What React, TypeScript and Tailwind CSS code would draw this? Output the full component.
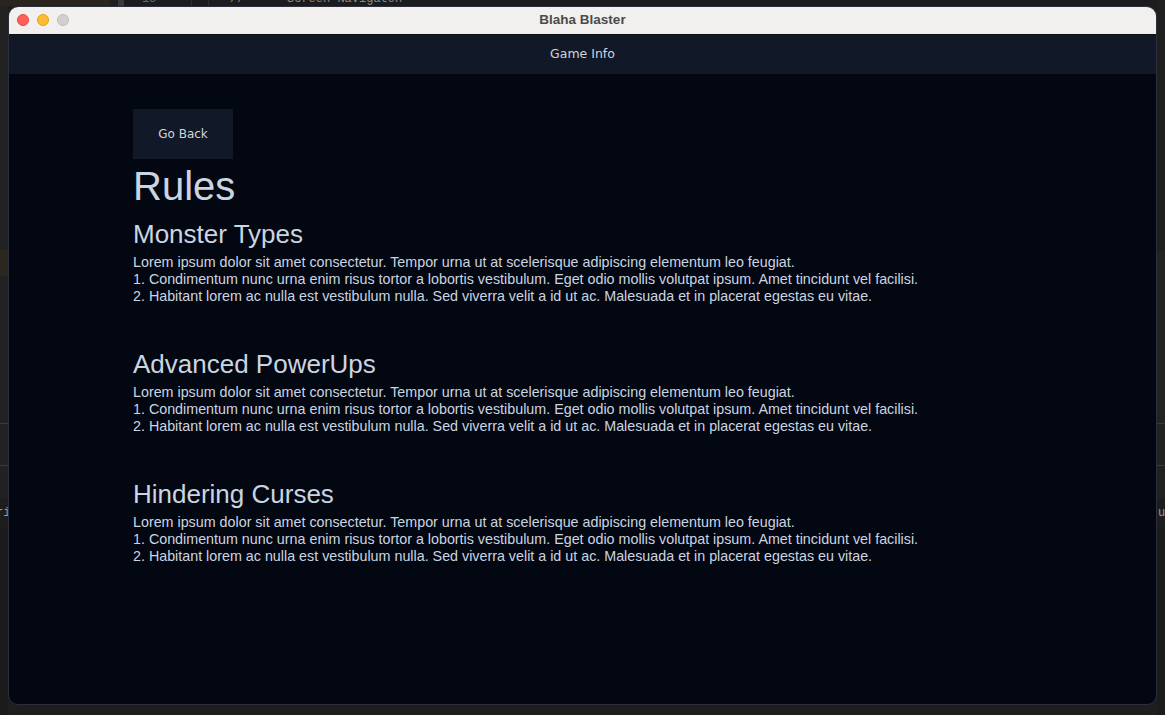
import React from "react";

const para = [
  "Lorem ipsum dolor sit amet consectetur. Tempor urna ut at scelerisque adipiscing elementum leo feugiat.",
  "1. Condimentum nunc urna enim risus tortor a lobortis vestibulum. Eget odio mollis volutpat ipsum. Amet tincidunt vel facilisi.",
  "2. Habitant lorem ac nulla est vestibulum nulla. Sed viverra velit a id ut ac. Malesuada et in placerat egestas eu vitae.",
];

const sections = ["Monster Types", "Advanced PowerUps", "Hindering Curses"];

function Section({ title }: { title: string }) {
  return (
    <section className="flex flex-col">
      <h2 className="text-[26px] leading-[40px] text-[#cbd5e1]">{title}</h2>
      <div className="text-[14.3px] leading-[17px] text-[#cbd5e1]">
        {para.map((p) => (
          <p key={p}>{p}</p>
        ))}
      </div>
    </section>
  );
}

export default function App() {
  return (
    <div
      className="relative w-[1165px] h-[715px] overflow-hidden bg-[#1e1e1e]"
      style={{ fontFamily: '"Liberation Sans", Arial, sans-serif' }}
    >
      {/* desktop / editor background */}
      <div className="flex h-full w-full">
        <div className="flex flex-col w-[8px] h-full">
          <div className="h-[6px] bg-[#2a241e]" />
          <div className="h-[244px] bg-[#222222]" />
          <div className="h-[26px] bg-[#2c261f]" />
          <div className="h-[147px] bg-[#222222]" />
          <div className="h-[1px] bg-[#3a3a3a]" />
          <div className="h-[41px] bg-[#222222]" />
          <div className="h-[1px] bg-[#3a3a3a]" />
          <div className="h-[32px] bg-[#212121]" />
          <div className="h-[30px] bg-[#1d1d1d] text-[12px] leading-[30px] text-[#9a9a9a] font-mono overflow-hidden whitespace-nowrap">
            <span className="relative -left-[4px]">ri</span>
          </div>
          <div className="flex-1 bg-[#1b1b1b]" />
        </div>
        <div className="flex-1 flex flex-col">
          <div className="h-[6px] flex overflow-hidden">
            <div className="w-[102px] bg-[#2a241e]" />
            <div className="w-[8px] bg-[#1f1f1f]" />
            <div className="w-[6px] bg-[#3a3a3c]" />
            <div className="flex-1 bg-[#1c1c1e] relative">
              <span className="absolute -top-[8px] left-[18px] font-mono text-[12px] leading-[14px] text-[#6a6a6a]">15</span>
              <span className="absolute top-0 left-[67px] w-[1px] h-[6px] bg-[#2e2e2e]" />
              <span className="absolute top-0 left-[84px] w-[1px] h-[6px] bg-[#2e2e2e]" />
              <span className="absolute -top-[8px] left-[106px] font-mono text-[12px] leading-[14px] text-[#8a8a8a]">//</span>
              <span className="absolute -top-[8px] left-[163px] font-mono text-[12px] leading-[14px] text-[#8a8a8a] whitespace-nowrap">Screen Navigaton</span>
            </div>
          </div>
          <div className="flex-1" />
        </div>
        <div className="flex flex-col w-[8px] h-full">
          <div className="h-[250px] bg-[#1f1f1f]" />
          <div className="h-[173px] bg-[#232323]" />
          <div className="h-[1px] bg-[#3a3a3a]" />
          <div className="h-[41px] bg-[#222222]" />
          <div className="h-[1px] bg-[#3a3a3a]" />
          <div className="h-[32px] bg-[#212121]" />
          <div className="h-[30px] bg-[#1d1d1d] text-[12px] leading-[30px] text-[#9a9a9a] font-mono overflow-hidden whitespace-nowrap">
            <span className="relative left-[1px]">ul</span>
          </div>
          <div className="flex-1 bg-[#1b1b1b]" />
        </div>
      </div>

      {/* window */}
      <div className="absolute left-[8px] top-[6px] w-[1149px] h-[699px] rounded-[10px] overflow-hidden border border-[#2a2f3b] flex flex-col bg-[#030712]">
        <div className="relative h-[28px] shrink-0 bg-[#f2f0ee] border-b border-[#111] flex items-center justify-center">
          <div className="absolute left-[8px] top-[7px] flex gap-[8px]">
            <span className="w-[12px] h-[12px] rounded-full bg-[#fe5f57] border border-[#e2463f]" />
            <span className="w-[12px] h-[12px] rounded-full bg-[#febc2e] border border-[#e1a116]" />
            <span className="w-[12px] h-[12px] rounded-full bg-[#d1d0ce] border border-[#bdbcba]" />
          </div>
          <span className="text-[13.5px] font-bold text-[#4b4b4b]">Blaha Blaster</span>
        </div>
        <div
          className="h-[39px] shrink-0 bg-[#111827] flex items-center justify-center text-[12.5px] text-[#d1d5db]"
          style={{ fontFamily: '"DejaVu Sans", sans-serif' }}
        >
          Game Info
        </div>
        <div className="flex-1 pl-[124px] pt-[35px] flex flex-col">
          <button
            className="w-[100px] h-[50px] bg-[#111827] text-[12px] text-[#d1d5db]"
            style={{ fontFamily: '"DejaVu Sans", sans-serif' }}
          >
            Go Back
          </button>
          <h1 className="text-[40px] leading-[56px] text-[#cbd5e1] -mt-[1px]">Rules</h1>
          <div className="flex flex-col gap-[39px]">
            {sections.map((s) => (
              <Section key={s} title={s} />
            ))}
          </div>
        </div>
      </div>
    </div>
  );
}
